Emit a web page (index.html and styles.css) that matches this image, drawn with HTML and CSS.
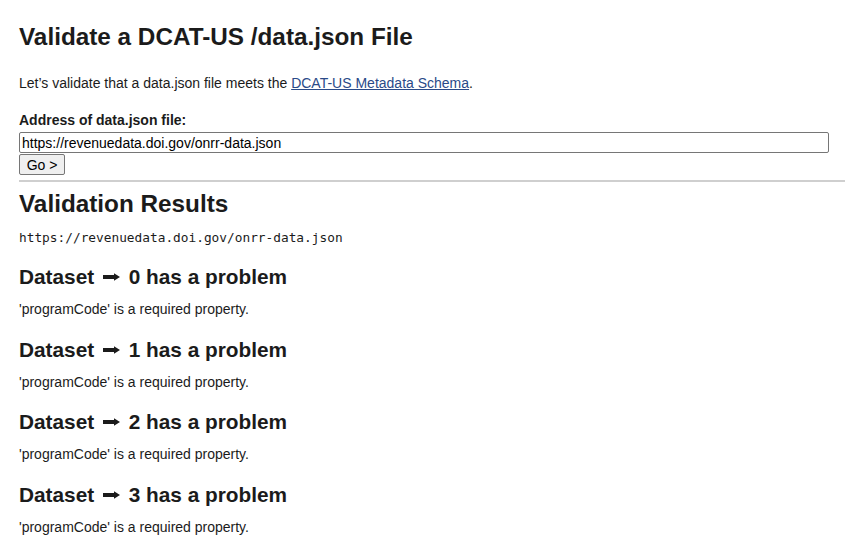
FILE: index.html
```html
<!DOCTYPE html>
<html lang="en">
<head>
<meta charset="utf-8">
<title>Validate a DCAT-US /data.json File</title>
<link rel="stylesheet" href="styles.css">
</head>
<body>
<main class="page">
  <h1 class="title">Validate a DCAT-US /data.json File</h1>
  <p class="intro">Let’s validate that a data.json file meets the <a href="#" class="link">DCAT-US Metadata Schema</a>.</p>
  <form class="form">
    <label class="label" for="url">Address of data.json file:</label>
    <input class="input" id="url" type="text" value="https://revenuedata.doi.gov/onrr-data.json">
    <button class="button" type="button">Go &gt;</button>
  </form>
  <hr class="rule">
  <h2 class="results-title">Validation Results</h2>
  <code class="url">https://revenuedata.doi.gov/onrr-data.json</code>
  <section class="problem">
    <h3 class="problem-title">Dataset <svg class="arrow" viewBox="0 0 17 8" width="17" height="8" aria-label="➡"><rect x="0" y="2" width="12" height="4"/><polygon points="11,0.3 17,4 11,7.7"/></svg> 0 has a problem</h3>
    <p class="problem-text">'programCode' is a required property.</p>
  </section>
  <section class="problem">
    <h3 class="problem-title">Dataset <svg class="arrow" viewBox="0 0 17 8" width="17" height="8" aria-label="➡"><rect x="0" y="2" width="12" height="4"/><polygon points="11,0.3 17,4 11,7.7"/></svg> 1 has a problem</h3>
    <p class="problem-text">'programCode' is a required property.</p>
  </section>
  <section class="problem">
    <h3 class="problem-title">Dataset <svg class="arrow" viewBox="0 0 17 8" width="17" height="8" aria-label="➡"><rect x="0" y="2" width="12" height="4"/><polygon points="11,0.3 17,4 11,7.7"/></svg> 2 has a problem</h3>
    <p class="problem-text">'programCode' is a required property.</p>
  </section>
  <section class="problem">
    <h3 class="problem-title">Dataset <svg class="arrow" viewBox="0 0 17 8" width="17" height="8" aria-label="➡"><rect x="0" y="2" width="12" height="4"/><polygon points="11,0.3 17,4 11,7.7"/></svg> 3 has a problem</h3>
    <p class="problem-text">'programCode' is a required property.</p>
  </section>
</main>
</body>
</html>
```

FILE: styles.css
```css
html, body {
  margin: 0;
  padding: 0;
  background: #ffffff;
}
body {
  font-family: "Liberation Sans", Arial, sans-serif;
  font-size: 14px;
  line-height: 18px;
  color: #1b1b1b;
}
.page {
  padding: 23px 0 20px 19px;
  display: flex;
  flex-direction: column;
  align-items: flex-start;
}
.title {
  margin: 0;
  font-size: 24.3px;
  line-height: 28px;
  font-weight: bold;
}
.intro {
  margin: 23px 0 0;
}
.link {
  color: #2a4a88;
  text-decoration: underline;
}
.form {
  margin: 19px 0 0;
  display: flex;
  flex-direction: column;
  align-items: flex-start;
}
.label {
  font-weight: bold;
  display: block;
}
.input {
  margin: 3px 0 0;
  width: 810px;
  height: 21px;
  box-sizing: border-box;
  border: 1px solid #767676;
  border-radius: 2px;
  padding: 0 2px;
  font-family: "Liberation Sans", Arial, sans-serif;
  font-size: 14px;
  color: #000;
  background: #fff;
}
.button {
  margin: 1px 0 0;
  height: 21px;
  width: 46px;
  box-sizing: border-box;
  border: 1px solid #767676;
  border-radius: 2px;
  background: #efefef;
  font-family: "Liberation Sans", Arial, sans-serif;
  font-size: 14px;
  color: #000;
  padding: 0;
}
.rule {
  align-self: stretch;
  margin: 5px 0 0;
  border: 0;
  border-top: 2px solid #cfcfcf;
  height: 0;
}
.results-title {
  margin: 8px 0 0;
  font-size: 24.3px;
  line-height: 28px;
  font-weight: bold;
}
.url {
  margin: 12px 0 0;
  font-family: "DejaVu Sans Mono", "Liberation Mono", monospace;
  font-size: 12.8px;
  line-height: 16px;
  display: block;
}
.problem {
  display: flex;
  flex-direction: column;
  margin-top: 18.7px;
}
.problem:first-of-type {
  margin-top: 18px;
}
.problem-title {
  margin: 0;
  font-size: 20.8px;
  line-height: 25px;
  font-weight: bold;
}
.arrow {
  display: inline-block;
  margin: 0 3px;
  vertical-align: 3px;
  fill: #1b1b1b;
}
.problem-text {
  margin: 11px 0 0;
  font-size: 14px;
  line-height: 18px;
}
```
